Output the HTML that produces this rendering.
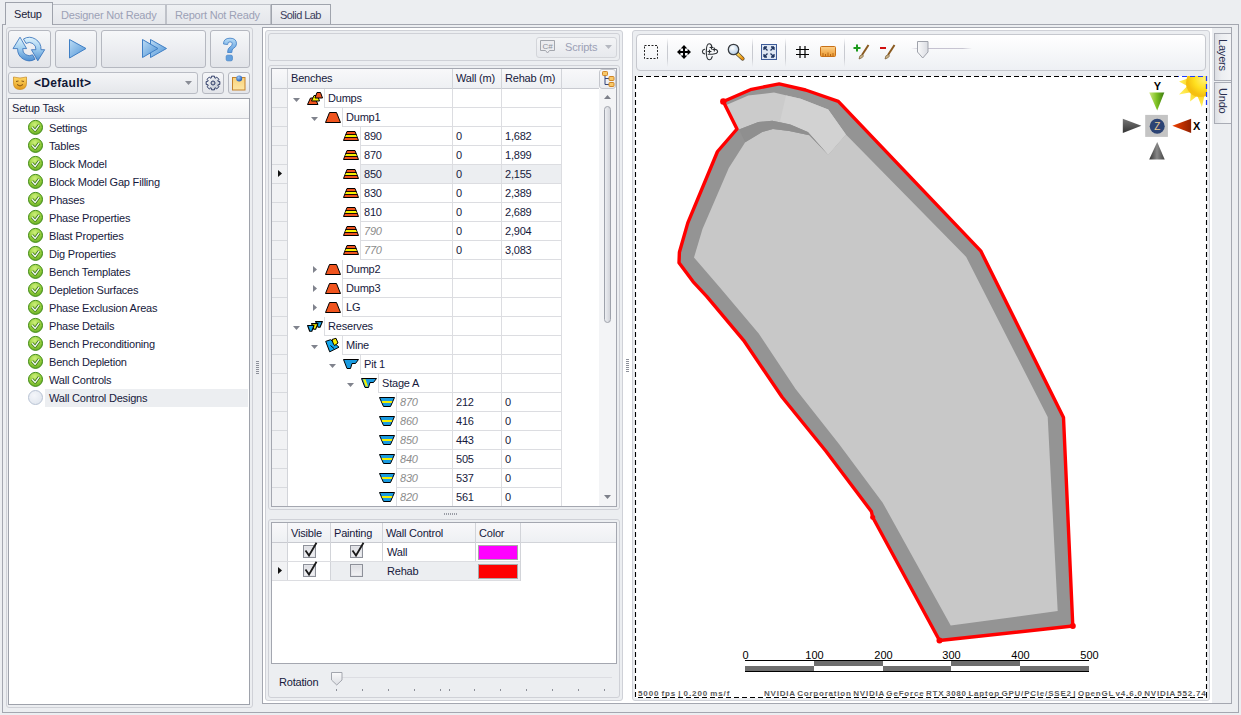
<!DOCTYPE html><html><head><meta charset="utf-8"><style>
*{box-sizing:border-box;margin:0;padding:0}
html,body{width:1241px;height:715px;overflow:hidden;background:#eceef1;font-family:"Liberation Sans", sans-serif;font-size:11px;color:#16193c;position:relative}
.t{position:absolute;white-space:nowrap;line-height:13px;letter-spacing:-0.2px}
.a{position:absolute;overflow:visible}
.gi{color:#8c8c8c;font-style:italic}
</style></head><body>
<div style="position:absolute;left:2px;top:24px;width:1237px;height:689px;border:1px solid #a4a7b0"></div>
<div style="position:absolute;left:52px;top:4px;width:114px;height:20px;background:linear-gradient(#eef0f3,#e5e7eb);border:1px solid #bfc2c9;border-bottom:none"></div>
<div class="t" style="left:61px;top:9px;color:#9ca1b6">Designer Not Ready</div>
<div style="position:absolute;left:166px;top:4px;width:105px;height:20px;background:linear-gradient(#eef0f3,#e5e7eb);border:1px solid #bfc2c9;border-bottom:none"></div>
<div class="t" style="left:175px;top:9px;color:#9ca1b6">Report Not Ready</div>
<div style="position:absolute;left:271px;top:4px;width:60px;height:20px;background:linear-gradient(#f1f2f5,#e3e5ea);border:1px solid #a0a4ad;border-bottom:none"></div>
<div class="t" style="left:280px;top:9px;color:#3a3e5c;letter-spacing:-0.55px">Solid Lab</div>
<div style="position:absolute;left:5px;top:2px;width:48px;height:23px;background:#eceef1;border:1px solid #9ea2ab;border-bottom:none"></div>
<div class="t" style="left:14px;top:8px;color:#1b1d3a">Setup</div>
<div style="position:absolute;left:6px;top:27px;width:247px;height:681px;border:1px solid #cfd1d7;border-radius:3px"></div>
<div style="position:absolute;left:8px;top:30px;width:43px;height:38px;border:1px solid #b5b8c0;border-radius:3px;background:linear-gradient(#f6f7f9,#e2e4e9)"></div>
<div style="position:absolute;left:55px;top:30px;width:42px;height:38px;border:1px solid #b5b8c0;border-radius:3px;background:linear-gradient(#f6f7f9,#e2e4e9)"></div>
<div style="position:absolute;left:101px;top:30px;width:105px;height:38px;border:1px solid #b5b8c0;border-radius:3px;background:linear-gradient(#f6f7f9,#e2e4e9)"></div>
<div style="position:absolute;left:210px;top:30px;width:40px;height:38px;border:1px solid #b5b8c0;border-radius:3px;background:linear-gradient(#f6f7f9,#e2e4e9)"></div>
<svg class="a" style="left:8px;top:30px" width="44" height="38" viewBox="0 0 44 38"><defs><linearGradient id="rb" x1="0" y1="0" x2="0" y2="1"><stop offset="0" stop-color="#dff3fc"/><stop offset="0.5" stop-color="#9fcdef"/><stop offset="1" stop-color="#4f8fd2"/></linearGradient></defs>
<path d="M9.6 18.6 L5 18.6 L12 7.2 L18.6 18.6 L14.7 18.6 A6.6 6.6 0 0 0 24.6 24.8 L27.15 29.2 A11.7 11.7 0 0 1 9.6 18.6 Z" fill="url(#rb)" stroke="#2f6cb8" stroke-width="0.8" stroke-linejoin="round"/>
<path d="M33 19.7 L36.7 19.7 L29.8 30.8 L23.4 19.7 L27.9 19.7 A6.6 6.6 0 0 0 18 13.4 L15.45 8.97 A11.7 11.7 0 0 1 33 19.7 Z" fill="url(#rb)" stroke="#2f6cb8" stroke-width="0.8" stroke-linejoin="round"/></svg>
<svg class="a" style="left:69px;top:39px" width="18" height="20" viewBox="0 0 18 20"><defs><linearGradient id="pl" x1="0" y1="0" x2="1" y2="1"><stop offset="0" stop-color="#bcdcf5"/><stop offset="1" stop-color="#4e93d6"/></linearGradient></defs><path d="M0.5 0.5 L17 9.5 L0.5 19 Z" fill="url(#pl)" stroke="#3f7fc5" stroke-width="1"/></svg>
<svg class="a" style="left:142px;top:39px" width="26" height="20" viewBox="0 0 26 20"><path d="M8.5 0.5 L24.5 9.5 L8.5 18.5 Z" fill="url(#pl)" stroke="#3f7fc5" stroke-width="1"/><path d="M0.5 0.5 L16 9.5 L0.5 18.5 Z" fill="url(#pl)" stroke="#3f7fc5" stroke-width="1"/></svg>
<svg class="a" style="left:222px;top:37px" width="16" height="25" viewBox="0 0 16 25"><defs><linearGradient id="hq" x1="0" y1="0" x2="0" y2="1"><stop offset="0" stop-color="#b8dcf6"/><stop offset="1" stop-color="#5a9ade"/></linearGradient></defs><path d="M1.5 7 Q1.5 1.2 8 1.2 Q14.5 1.2 14.5 6.8 Q14.5 9.8 11.2 11.6 Q9.8 12.5 9.8 15.5 L5.6 15.5 Q5.6 11.2 8.2 9.8 Q10.3 8.6 10.3 6.8 Q10.3 4.8 8 4.8 Q5.6 4.8 5.6 7.5 Z" fill="url(#hq)" stroke="#4a86c8" stroke-width="0.9"/><rect x="4.2" y="18.2" width="6.2" height="5.6" rx="1.4" fill="#63a0de" stroke="#4a86c8" stroke-width="0.8"/></svg>
<div style="position:absolute;left:8px;top:72px;width:190px;height:22px;border:1px solid #b9bcc4;border-radius:3px;background:linear-gradient(#f4f5f7,#e5e7eb)"></div>
<svg class="a" style="left:13px;top:76px" width="14" height="14" viewBox="0 0 14 14"><defs><linearGradient id="mk" x1="0" y1="0" x2="0" y2="1"><stop offset="0" stop-color="#ffd966"/><stop offset="1" stop-color="#e39a1c"/></linearGradient></defs><path d="M0.5 1 Q7 3 13.5 1 L13.5 7 Q13.5 13.5 7 13.5 Q0.5 13.5 0.5 7 Z" fill="url(#mk)" stroke="#c9861a" stroke-width="0.7"/><path d="M3 5.5 L5.5 5 M8.5 5 L11 5.5" stroke="#7a4a10" stroke-width="0.9"/><path d="M4 8.5 Q7 11.5 10 8.5" fill="none" stroke="#7a4a10" stroke-width="0.9"/></svg>
<div class="t" style="left:34px;top:77px;font-weight:bold;color:#101735;letter-spacing:0.3px;font-size:12px">&lt;Default&gt;</div>
<svg class="a" style="left:185px;top:81px" width="7" height="4" viewBox="0 0 7 4"><path d="M0 0 L7 0 L3.5 4 Z" fill="#8a8d96"/></svg>
<div style="position:absolute;left:202px;top:72px;width:22px;height:22px;border:1px solid #b5b8c0;border-radius:3px;background:linear-gradient(#f6f7f9,#e2e4e9)"></div>
<div style="position:absolute;left:228px;top:72px;width:22px;height:22px;border:1px solid #b5b8c0;border-radius:3px;background:linear-gradient(#f6f7f9,#e2e4e9)"></div>
<svg class="a" style="left:205px;top:75px" width="16" height="16" viewBox="0 0 16 16"><defs><linearGradient id="gr" x1="0" y1="0" x2="1" y2="1"><stop offset="0" stop-color="#ffffff"/><stop offset="1" stop-color="#b9c0cc"/></linearGradient></defs><polygon points="14.83,6.47 14.83,9.53 12.87,9.83 12.74,10.15 13.91,11.75 11.75,13.91 10.15,12.74 9.83,12.87 9.53,14.83 6.47,14.83 6.17,12.87 5.85,12.74 4.25,13.91 2.09,11.75 3.26,10.15 3.13,9.83 1.17,9.53 1.17,6.47 3.13,6.17 3.26,5.85 2.09,4.25 4.25,2.09 5.85,3.26 6.17,3.13 6.47,1.17 9.53,1.17 9.83,3.13 10.15,3.26 11.75,2.09 13.91,4.25 12.74,5.85 12.87,6.17" fill="url(#gr)" stroke="#2c3a66" stroke-width="1" stroke-linejoin="round"/><circle cx="8" cy="8" r="2" fill="#c8ccd4" stroke="#2c3a66" stroke-width="1"/></svg>
<svg class="a" style="left:231px;top:74px" width="16" height="17" viewBox="0 0 16 17"><defs><linearGradient id="nt" x1="0" y1="0" x2="0" y2="1"><stop offset="0" stop-color="#f9d27a"/><stop offset="1" stop-color="#fde6a6"/></linearGradient><radialGradient id="pin" cx="40%" cy="35%" r="60%"><stop offset="0" stop-color="#9cc8f4"/><stop offset="1" stop-color="#2a62b8"/></radialGradient></defs><rect x="1.5" y="3.5" width="12.5" height="12.5" fill="url(#nt)" stroke="#c4822c" stroke-width="1"/><circle cx="8.2" cy="4.5" r="3" fill="url(#pin)"/></svg>
<div style="position:absolute;left:8px;top:98px;width:242px;height:607px;border:1px solid #9ea2ab;background:#fff"></div>
<div style="position:absolute;left:9px;top:99px;width:240px;height:20px;background:linear-gradient(#fdfdfd,#f1f2f4);border-bottom:1px solid #c9cbd1"></div>
<div class="t" style="left:12px;top:102px;">Setup Task</div>
<svg width="0" height="0" style="position:absolute"><defs><radialGradient id="gck" cx="45%" cy="30%" r="75%"><stop offset="0" stop-color="#cdf07a"/><stop offset="0.55" stop-color="#98d040"/><stop offset="1" stop-color="#5fa820"/></radialGradient></defs></svg>
<svg class="a" style="left:28px;top:120px" width="16" height="16" viewBox="0 0 16 16"><circle cx="7.5" cy="7.4" r="7" fill="url(#gck)" stroke="#3f8a14" stroke-width="1"/><path d="M4.1 7.2 L7.2 10.4 L11.1 5.1" fill="none" stroke="#2f6e10" stroke-width="2.8" stroke-linejoin="round"/><path d="M4.1 7.2 L7.2 10.4 L11.1 5.1" fill="none" stroke="#f4f8f0" stroke-width="1.4" stroke-linejoin="round"/></svg>
<div class="t" style="left:49px;top:122px;">Settings</div>
<svg class="a" style="left:28px;top:138px" width="16" height="16" viewBox="0 0 16 16"><circle cx="7.5" cy="7.4" r="7" fill="url(#gck)" stroke="#3f8a14" stroke-width="1"/><path d="M4.1 7.2 L7.2 10.4 L11.1 5.1" fill="none" stroke="#2f6e10" stroke-width="2.8" stroke-linejoin="round"/><path d="M4.1 7.2 L7.2 10.4 L11.1 5.1" fill="none" stroke="#f4f8f0" stroke-width="1.4" stroke-linejoin="round"/></svg>
<div class="t" style="left:49px;top:140px;">Tables</div>
<svg class="a" style="left:28px;top:156px" width="16" height="16" viewBox="0 0 16 16"><circle cx="7.5" cy="7.4" r="7" fill="url(#gck)" stroke="#3f8a14" stroke-width="1"/><path d="M4.1 7.2 L7.2 10.4 L11.1 5.1" fill="none" stroke="#2f6e10" stroke-width="2.8" stroke-linejoin="round"/><path d="M4.1 7.2 L7.2 10.4 L11.1 5.1" fill="none" stroke="#f4f8f0" stroke-width="1.4" stroke-linejoin="round"/></svg>
<div class="t" style="left:49px;top:158px;">Block Model</div>
<svg class="a" style="left:28px;top:174px" width="16" height="16" viewBox="0 0 16 16"><circle cx="7.5" cy="7.4" r="7" fill="url(#gck)" stroke="#3f8a14" stroke-width="1"/><path d="M4.1 7.2 L7.2 10.4 L11.1 5.1" fill="none" stroke="#2f6e10" stroke-width="2.8" stroke-linejoin="round"/><path d="M4.1 7.2 L7.2 10.4 L11.1 5.1" fill="none" stroke="#f4f8f0" stroke-width="1.4" stroke-linejoin="round"/></svg>
<div class="t" style="left:49px;top:176px;">Block Model Gap Filling</div>
<svg class="a" style="left:28px;top:192px" width="16" height="16" viewBox="0 0 16 16"><circle cx="7.5" cy="7.4" r="7" fill="url(#gck)" stroke="#3f8a14" stroke-width="1"/><path d="M4.1 7.2 L7.2 10.4 L11.1 5.1" fill="none" stroke="#2f6e10" stroke-width="2.8" stroke-linejoin="round"/><path d="M4.1 7.2 L7.2 10.4 L11.1 5.1" fill="none" stroke="#f4f8f0" stroke-width="1.4" stroke-linejoin="round"/></svg>
<div class="t" style="left:49px;top:194px;">Phases</div>
<svg class="a" style="left:28px;top:210px" width="16" height="16" viewBox="0 0 16 16"><circle cx="7.5" cy="7.4" r="7" fill="url(#gck)" stroke="#3f8a14" stroke-width="1"/><path d="M4.1 7.2 L7.2 10.4 L11.1 5.1" fill="none" stroke="#2f6e10" stroke-width="2.8" stroke-linejoin="round"/><path d="M4.1 7.2 L7.2 10.4 L11.1 5.1" fill="none" stroke="#f4f8f0" stroke-width="1.4" stroke-linejoin="round"/></svg>
<div class="t" style="left:49px;top:212px;">Phase Properties</div>
<svg class="a" style="left:28px;top:228px" width="16" height="16" viewBox="0 0 16 16"><circle cx="7.5" cy="7.4" r="7" fill="url(#gck)" stroke="#3f8a14" stroke-width="1"/><path d="M4.1 7.2 L7.2 10.4 L11.1 5.1" fill="none" stroke="#2f6e10" stroke-width="2.8" stroke-linejoin="round"/><path d="M4.1 7.2 L7.2 10.4 L11.1 5.1" fill="none" stroke="#f4f8f0" stroke-width="1.4" stroke-linejoin="round"/></svg>
<div class="t" style="left:49px;top:230px;">Blast Properties</div>
<svg class="a" style="left:28px;top:246px" width="16" height="16" viewBox="0 0 16 16"><circle cx="7.5" cy="7.4" r="7" fill="url(#gck)" stroke="#3f8a14" stroke-width="1"/><path d="M4.1 7.2 L7.2 10.4 L11.1 5.1" fill="none" stroke="#2f6e10" stroke-width="2.8" stroke-linejoin="round"/><path d="M4.1 7.2 L7.2 10.4 L11.1 5.1" fill="none" stroke="#f4f8f0" stroke-width="1.4" stroke-linejoin="round"/></svg>
<div class="t" style="left:49px;top:248px;">Dig Properties</div>
<svg class="a" style="left:28px;top:264px" width="16" height="16" viewBox="0 0 16 16"><circle cx="7.5" cy="7.4" r="7" fill="url(#gck)" stroke="#3f8a14" stroke-width="1"/><path d="M4.1 7.2 L7.2 10.4 L11.1 5.1" fill="none" stroke="#2f6e10" stroke-width="2.8" stroke-linejoin="round"/><path d="M4.1 7.2 L7.2 10.4 L11.1 5.1" fill="none" stroke="#f4f8f0" stroke-width="1.4" stroke-linejoin="round"/></svg>
<div class="t" style="left:49px;top:266px;">Bench Templates</div>
<svg class="a" style="left:28px;top:282px" width="16" height="16" viewBox="0 0 16 16"><circle cx="7.5" cy="7.4" r="7" fill="url(#gck)" stroke="#3f8a14" stroke-width="1"/><path d="M4.1 7.2 L7.2 10.4 L11.1 5.1" fill="none" stroke="#2f6e10" stroke-width="2.8" stroke-linejoin="round"/><path d="M4.1 7.2 L7.2 10.4 L11.1 5.1" fill="none" stroke="#f4f8f0" stroke-width="1.4" stroke-linejoin="round"/></svg>
<div class="t" style="left:49px;top:284px;">Depletion Surfaces</div>
<svg class="a" style="left:28px;top:300px" width="16" height="16" viewBox="0 0 16 16"><circle cx="7.5" cy="7.4" r="7" fill="url(#gck)" stroke="#3f8a14" stroke-width="1"/><path d="M4.1 7.2 L7.2 10.4 L11.1 5.1" fill="none" stroke="#2f6e10" stroke-width="2.8" stroke-linejoin="round"/><path d="M4.1 7.2 L7.2 10.4 L11.1 5.1" fill="none" stroke="#f4f8f0" stroke-width="1.4" stroke-linejoin="round"/></svg>
<div class="t" style="left:49px;top:302px;">Phase Exclusion Areas</div>
<svg class="a" style="left:28px;top:318px" width="16" height="16" viewBox="0 0 16 16"><circle cx="7.5" cy="7.4" r="7" fill="url(#gck)" stroke="#3f8a14" stroke-width="1"/><path d="M4.1 7.2 L7.2 10.4 L11.1 5.1" fill="none" stroke="#2f6e10" stroke-width="2.8" stroke-linejoin="round"/><path d="M4.1 7.2 L7.2 10.4 L11.1 5.1" fill="none" stroke="#f4f8f0" stroke-width="1.4" stroke-linejoin="round"/></svg>
<div class="t" style="left:49px;top:320px;">Phase Details</div>
<svg class="a" style="left:28px;top:336px" width="16" height="16" viewBox="0 0 16 16"><circle cx="7.5" cy="7.4" r="7" fill="url(#gck)" stroke="#3f8a14" stroke-width="1"/><path d="M4.1 7.2 L7.2 10.4 L11.1 5.1" fill="none" stroke="#2f6e10" stroke-width="2.8" stroke-linejoin="round"/><path d="M4.1 7.2 L7.2 10.4 L11.1 5.1" fill="none" stroke="#f4f8f0" stroke-width="1.4" stroke-linejoin="round"/></svg>
<div class="t" style="left:49px;top:338px;">Bench Preconditioning</div>
<svg class="a" style="left:28px;top:354px" width="16" height="16" viewBox="0 0 16 16"><circle cx="7.5" cy="7.4" r="7" fill="url(#gck)" stroke="#3f8a14" stroke-width="1"/><path d="M4.1 7.2 L7.2 10.4 L11.1 5.1" fill="none" stroke="#2f6e10" stroke-width="2.8" stroke-linejoin="round"/><path d="M4.1 7.2 L7.2 10.4 L11.1 5.1" fill="none" stroke="#f4f8f0" stroke-width="1.4" stroke-linejoin="round"/></svg>
<div class="t" style="left:49px;top:356px;">Bench Depletion</div>
<svg class="a" style="left:28px;top:372px" width="16" height="16" viewBox="0 0 16 16"><circle cx="7.5" cy="7.4" r="7" fill="url(#gck)" stroke="#3f8a14" stroke-width="1"/><path d="M4.1 7.2 L7.2 10.4 L11.1 5.1" fill="none" stroke="#2f6e10" stroke-width="2.8" stroke-linejoin="round"/><path d="M4.1 7.2 L7.2 10.4 L11.1 5.1" fill="none" stroke="#f4f8f0" stroke-width="1.4" stroke-linejoin="round"/></svg>
<div class="t" style="left:49px;top:374px;">Wall Controls</div>
<div style="position:absolute;left:45px;top:389px;width:203px;height:18px;background:#eceef1"></div>
<div style="position:absolute;left:28px;top:390px;width:15px;height:15px;border-radius:50%;background:radial-gradient(circle at 40% 35%,#f4f6fa,#dde3ec);border:1px solid #b7c2d3"></div>
<div class="t" style="left:49px;top:392px;">Wall Control Designs</div>
<div style="position:absolute;left:262px;top:27px;width:970px;height:677px;border:1px solid #a4a7b0;background:#fff"></div>
<div style="position:absolute;left:265px;top:30px;width:358px;height:671px;border:1px solid #cfd1d7;border-radius:3px;background:#eceef1"></div>
<svg class="a" style="left:256px;top:361px" width="3" height="13" viewBox="0 0 3 13"><rect x="0" y="0" width="3" height="1" fill="#8d909a"/><rect x="0" y="2" width="3" height="1" fill="#8d909a"/><rect x="0" y="4" width="3" height="1" fill="#8d909a"/><rect x="0" y="6" width="3" height="1" fill="#8d909a"/><rect x="0" y="8" width="3" height="1" fill="#8d909a"/><rect x="0" y="10" width="3" height="1" fill="#8d909a"/><rect x="0" y="12" width="3" height="1" fill="#8d909a"/></svg>
<svg class="a" style="left:626px;top:359px" width="3" height="13" viewBox="0 0 3 13"><rect x="0" y="0" width="3" height="1" fill="#8d909a"/><rect x="0" y="2" width="3" height="1" fill="#8d909a"/><rect x="0" y="4" width="3" height="1" fill="#8d909a"/><rect x="0" y="6" width="3" height="1" fill="#8d909a"/><rect x="0" y="8" width="3" height="1" fill="#8d909a"/><rect x="0" y="10" width="3" height="1" fill="#8d909a"/><rect x="0" y="12" width="3" height="1" fill="#8d909a"/></svg>
<div style="position:absolute;left:268px;top:33px;width:352px;height:28px;border:1px solid #cfd1d7;border-radius:3px"></div>
<div style="position:absolute;left:536px;top:37px;width:81px;height:21px;border:1px solid #d3d5da;border-radius:3px;background:linear-gradient(#f3f4f6,#e7e9ed)"></div>
<svg class="a" style="left:540px;top:40px" width="16" height="14" viewBox="0 0 16 14"><path d="M0.5 0.5 H14.5 V10.5 H9.5 L7.5 13 L5.5 10.5 H0.5 Z" fill="#ececef" stroke="#a3a6ad" stroke-width="1"/><text x="7.5" y="8.5" font-family="Liberation Sans" font-size="8" text-anchor="middle" fill="#8d9099">C#</text></svg>
<div class="t" style="left:565px;top:41px;color:#9ca1b6">Scripts</div>
<svg class="a" style="left:605px;top:45px" width="7" height="4" viewBox="0 0 7 4"><path d="M0 0 L7 0 L3.5 4 Z" fill="#b5b8c0"/></svg>
<div style="position:absolute;left:268px;top:65px;width:352px;height:445px;border:1px solid #cfd1d7;border-radius:3px"></div>
<div style="position:absolute;left:271px;top:68px;width:346px;height:439px;border:1px solid #a4a7b0;background:#fff"></div>
<div style="position:absolute;left:272px;top:69px;width:327px;height:20px;background:linear-gradient(#f8f8fa,#eef0f3);border-bottom:1px solid #c8cad0"></div>
<div style="position:absolute;left:287px;top:69px;width:1px;height:20px;background:#d2d4d9"></div>
<div style="position:absolute;left:452px;top:69px;width:1px;height:20px;background:#d2d4d9"></div>
<div style="position:absolute;left:501px;top:69px;width:1px;height:20px;background:#d2d4d9"></div>
<div style="position:absolute;left:561px;top:69px;width:1px;height:20px;background:#d2d4d9"></div>
<div class="t" style="left:291px;top:72px;">Benches</div>
<div class="t" style="left:456px;top:72px;">Wall (m)</div>
<div class="t" style="left:505px;top:72px;">Rehab (m)</div>
<div style="position:absolute;left:599px;top:69px;width:17px;height:20px;border:1px solid #c4c6cc;border-radius:3px;background:linear-gradient(#f8f8fa,#e9ebef)"></div>
<svg class="a" style="left:601px;top:70px" width="14" height="18" viewBox="0 0 14 18"><path d="M4 5.5 V14.5 H8 M4 8.5 H8" fill="none" stroke="#34457a" stroke-width="1"/><rect x="1.5" y="1.5" width="5" height="4" rx="0.8" fill="#f8c868" stroke="#d08628"/><rect x="8" y="6.5" width="5" height="4" rx="0.8" fill="#f8c868" stroke="#d08628"/><rect x="8" y="12.5" width="5" height="4" rx="0.8" fill="#f8c868" stroke="#d08628"/></svg>
<div style="position:absolute;left:272px;top:89px;width:15px;height:417px;background:#f1f2f4"></div>
<div style="position:absolute;left:287px;top:89px;width:1px;height:417px;background:#d2d4d9"></div>
<div style="position:absolute;left:599px;top:89px;width:17px;height:417px;background:#f3f4f6"></div>
<svg class="a" style="left:604px;top:95px" width="7" height="4" viewBox="0 0 7 4"><path d="M0 4 L7 4 L3.5 0 Z" fill="#7d808a"/></svg>
<div style="position:absolute;left:604px;top:106px;width:7px;height:217px;border:1px solid #9ea2ab;border-radius:4px;background:linear-gradient(90deg,#eceef2,#d2d4da)"></div>
<svg class="a" style="left:604px;top:495px" width="7" height="4" viewBox="0 0 7 4"><path d="M0 0 L7 0 L3.5 4 Z" fill="#7d808a"/></svg>
<div style="position:absolute;left:272px;top:107px;width:15px;height:1px;background:#d8dade"></div>
<div style="position:absolute;left:324px;top:107px;width:238px;height:1px;background:#dcdde1"></div>
<div style="position:absolute;left:324px;top:89px;width:1px;height:19px;background:#dcdde1"></div>
<div style="position:absolute;left:452px;top:89px;width:1px;height:19px;background:#dcdde1"></div>
<div style="position:absolute;left:501px;top:89px;width:1px;height:19px;background:#dcdde1"></div>
<div style="position:absolute;left:561px;top:89px;width:1px;height:19px;background:#dcdde1"></div>
<svg class="a" style="left:307px;top:92px" width="16" height="13" viewBox="0 0 16 13"><path d="M3.5 6 H8 L11 12.5 H0.5 Z" fill="#f0541e" stroke="#000" stroke-width="1"/><path d="M7 3.5 H10.5 L12.5 9 H4.5 Z" fill="#f5f000" stroke="#000" stroke-width="1"/><path d="M10 0.5 H13.5 L15.5 6 H8 Z" fill="#f0541e" stroke="#000" stroke-width="1"/></svg>
<svg class="a" style="left:293px;top:98px" width="7" height="4" viewBox="0 0 7 4"><path d="M0 0 L7 0 L3.5 4 Z" fill="#80838d"/></svg>
<div class="t" style="left:328px;top:92px">Dumps</div>
<div style="position:absolute;left:272px;top:126px;width:15px;height:1px;background:#d8dade"></div>
<div style="position:absolute;left:342px;top:126px;width:220px;height:1px;background:#dcdde1"></div>
<div style="position:absolute;left:342px;top:108px;width:1px;height:19px;background:#dcdde1"></div>
<div style="position:absolute;left:452px;top:108px;width:1px;height:19px;background:#dcdde1"></div>
<div style="position:absolute;left:501px;top:108px;width:1px;height:19px;background:#dcdde1"></div>
<div style="position:absolute;left:561px;top:108px;width:1px;height:19px;background:#dcdde1"></div>
<svg class="a" style="left:325px;top:112px" width="16" height="11" viewBox="0 0 16 11"><path d="M4.5 0.5 H11.5 L15.5 10.5 H0.5 Z" fill="#f0541e" stroke="#000" stroke-width="1"/></svg>
<svg class="a" style="left:311px;top:117px" width="7" height="4" viewBox="0 0 7 4"><path d="M0 0 L7 0 L3.5 4 Z" fill="#80838d"/></svg>
<div class="t" style="left:346px;top:111px">Dump1</div>
<div style="position:absolute;left:272px;top:145px;width:15px;height:1px;background:#d8dade"></div>
<div style="position:absolute;left:360px;top:145px;width:202px;height:1px;background:#dcdde1"></div>
<div style="position:absolute;left:360px;top:127px;width:1px;height:19px;background:#dcdde1"></div>
<div style="position:absolute;left:452px;top:127px;width:1px;height:19px;background:#dcdde1"></div>
<div style="position:absolute;left:501px;top:127px;width:1px;height:19px;background:#dcdde1"></div>
<div style="position:absolute;left:561px;top:127px;width:1px;height:19px;background:#dcdde1"></div>
<svg class="a" style="left:343px;top:131px" width="16" height="10" viewBox="0 0 16 10"><path d="M4 0.5 H12 L15.5 9.5 H0.5 Z" fill="#f0541e" stroke="#000" stroke-width="1"/><path d="M2.6 3.5 H13.4 M1.8 6.5 H14.2" stroke="#000" stroke-width="0.9"/><path d="M3 4 H13 L13.8 6 H2.2 Z" fill="#f5f000"/></svg>
<div class="t" style="left:364px;top:130px">890</div>
<div class="t" style="left:456px;top:130px;">0</div>
<div class="t" style="left:505px;top:130px;">1,682</div>
<div style="position:absolute;left:272px;top:164px;width:15px;height:1px;background:#d8dade"></div>
<div style="position:absolute;left:360px;top:164px;width:202px;height:1px;background:#dcdde1"></div>
<div style="position:absolute;left:360px;top:146px;width:1px;height:19px;background:#dcdde1"></div>
<div style="position:absolute;left:452px;top:146px;width:1px;height:19px;background:#dcdde1"></div>
<div style="position:absolute;left:501px;top:146px;width:1px;height:19px;background:#dcdde1"></div>
<div style="position:absolute;left:561px;top:146px;width:1px;height:19px;background:#dcdde1"></div>
<svg class="a" style="left:343px;top:150px" width="16" height="10" viewBox="0 0 16 10"><path d="M4 0.5 H12 L15.5 9.5 H0.5 Z" fill="#f0541e" stroke="#000" stroke-width="1"/><path d="M2.6 3.5 H13.4 M1.8 6.5 H14.2" stroke="#000" stroke-width="0.9"/><path d="M3 4 H13 L13.8 6 H2.2 Z" fill="#f5f000"/></svg>
<div class="t" style="left:364px;top:149px">870</div>
<div class="t" style="left:456px;top:149px;">0</div>
<div class="t" style="left:505px;top:149px;">1,899</div>
<div style="position:absolute;left:272px;top:183px;width:15px;height:1px;background:#d8dade"></div>
<div style="position:absolute;left:360px;top:165px;width:201px;height:18px;background:#eceef1"></div>
<svg class="a" style="left:278px;top:170px" width="4" height="7" viewBox="0 0 4 7"><path d="M0 0 L4 3.5 L0 7 Z" fill="#111"/></svg>
<div style="position:absolute;left:360px;top:183px;width:202px;height:1px;background:#dcdde1"></div>
<div style="position:absolute;left:360px;top:165px;width:1px;height:19px;background:#dcdde1"></div>
<div style="position:absolute;left:452px;top:165px;width:1px;height:19px;background:#dcdde1"></div>
<div style="position:absolute;left:501px;top:165px;width:1px;height:19px;background:#dcdde1"></div>
<div style="position:absolute;left:561px;top:165px;width:1px;height:19px;background:#dcdde1"></div>
<svg class="a" style="left:343px;top:169px" width="16" height="10" viewBox="0 0 16 10"><path d="M4 0.5 H12 L15.5 9.5 H0.5 Z" fill="#f0541e" stroke="#000" stroke-width="1"/><path d="M2.6 3.5 H13.4 M1.8 6.5 H14.2" stroke="#000" stroke-width="0.9"/><path d="M3 4 H13 L13.8 6 H2.2 Z" fill="#f5f000"/></svg>
<div class="t" style="left:364px;top:168px">850</div>
<div class="t" style="left:456px;top:168px;">0</div>
<div class="t" style="left:505px;top:168px;">2,155</div>
<div style="position:absolute;left:272px;top:202px;width:15px;height:1px;background:#d8dade"></div>
<div style="position:absolute;left:360px;top:202px;width:202px;height:1px;background:#dcdde1"></div>
<div style="position:absolute;left:360px;top:184px;width:1px;height:19px;background:#dcdde1"></div>
<div style="position:absolute;left:452px;top:184px;width:1px;height:19px;background:#dcdde1"></div>
<div style="position:absolute;left:501px;top:184px;width:1px;height:19px;background:#dcdde1"></div>
<div style="position:absolute;left:561px;top:184px;width:1px;height:19px;background:#dcdde1"></div>
<svg class="a" style="left:343px;top:188px" width="16" height="10" viewBox="0 0 16 10"><path d="M4 0.5 H12 L15.5 9.5 H0.5 Z" fill="#f0541e" stroke="#000" stroke-width="1"/><path d="M2.6 3.5 H13.4 M1.8 6.5 H14.2" stroke="#000" stroke-width="0.9"/><path d="M3 4 H13 L13.8 6 H2.2 Z" fill="#f5f000"/></svg>
<div class="t" style="left:364px;top:187px">830</div>
<div class="t" style="left:456px;top:187px;">0</div>
<div class="t" style="left:505px;top:187px;">2,389</div>
<div style="position:absolute;left:272px;top:221px;width:15px;height:1px;background:#d8dade"></div>
<div style="position:absolute;left:360px;top:221px;width:202px;height:1px;background:#dcdde1"></div>
<div style="position:absolute;left:360px;top:203px;width:1px;height:19px;background:#dcdde1"></div>
<div style="position:absolute;left:452px;top:203px;width:1px;height:19px;background:#dcdde1"></div>
<div style="position:absolute;left:501px;top:203px;width:1px;height:19px;background:#dcdde1"></div>
<div style="position:absolute;left:561px;top:203px;width:1px;height:19px;background:#dcdde1"></div>
<svg class="a" style="left:343px;top:207px" width="16" height="10" viewBox="0 0 16 10"><path d="M4 0.5 H12 L15.5 9.5 H0.5 Z" fill="#f0541e" stroke="#000" stroke-width="1"/><path d="M2.6 3.5 H13.4 M1.8 6.5 H14.2" stroke="#000" stroke-width="0.9"/><path d="M3 4 H13 L13.8 6 H2.2 Z" fill="#f5f000"/></svg>
<div class="t" style="left:364px;top:206px">810</div>
<div class="t" style="left:456px;top:206px;">0</div>
<div class="t" style="left:505px;top:206px;">2,689</div>
<div style="position:absolute;left:272px;top:240px;width:15px;height:1px;background:#d8dade"></div>
<div style="position:absolute;left:360px;top:240px;width:202px;height:1px;background:#dcdde1"></div>
<div style="position:absolute;left:360px;top:222px;width:1px;height:19px;background:#dcdde1"></div>
<div style="position:absolute;left:452px;top:222px;width:1px;height:19px;background:#dcdde1"></div>
<div style="position:absolute;left:501px;top:222px;width:1px;height:19px;background:#dcdde1"></div>
<div style="position:absolute;left:561px;top:222px;width:1px;height:19px;background:#dcdde1"></div>
<svg class="a" style="left:343px;top:226px" width="16" height="10" viewBox="0 0 16 10"><path d="M4 0.5 H12 L15.5 9.5 H0.5 Z" fill="#f0541e" stroke="#000" stroke-width="1"/><path d="M2.6 3.5 H13.4 M1.8 6.5 H14.2" stroke="#000" stroke-width="0.9"/><path d="M3 4 H13 L13.8 6 H2.2 Z" fill="#f5f000"/></svg>
<div class="t gi" style="left:364px;top:225px">790</div>
<div class="t" style="left:456px;top:225px;">0</div>
<div class="t" style="left:505px;top:225px;">2,904</div>
<div style="position:absolute;left:272px;top:259px;width:15px;height:1px;background:#d8dade"></div>
<div style="position:absolute;left:360px;top:259px;width:202px;height:1px;background:#dcdde1"></div>
<div style="position:absolute;left:360px;top:241px;width:1px;height:19px;background:#dcdde1"></div>
<div style="position:absolute;left:452px;top:241px;width:1px;height:19px;background:#dcdde1"></div>
<div style="position:absolute;left:501px;top:241px;width:1px;height:19px;background:#dcdde1"></div>
<div style="position:absolute;left:561px;top:241px;width:1px;height:19px;background:#dcdde1"></div>
<svg class="a" style="left:343px;top:245px" width="16" height="10" viewBox="0 0 16 10"><path d="M4 0.5 H12 L15.5 9.5 H0.5 Z" fill="#f0541e" stroke="#000" stroke-width="1"/><path d="M2.6 3.5 H13.4 M1.8 6.5 H14.2" stroke="#000" stroke-width="0.9"/><path d="M3 4 H13 L13.8 6 H2.2 Z" fill="#f5f000"/></svg>
<div class="t gi" style="left:364px;top:244px">770</div>
<div class="t" style="left:456px;top:244px;">0</div>
<div class="t" style="left:505px;top:244px;">3,083</div>
<div style="position:absolute;left:272px;top:278px;width:15px;height:1px;background:#d8dade"></div>
<div style="position:absolute;left:342px;top:278px;width:220px;height:1px;background:#dcdde1"></div>
<div style="position:absolute;left:342px;top:260px;width:1px;height:19px;background:#dcdde1"></div>
<div style="position:absolute;left:452px;top:260px;width:1px;height:19px;background:#dcdde1"></div>
<div style="position:absolute;left:501px;top:260px;width:1px;height:19px;background:#dcdde1"></div>
<div style="position:absolute;left:561px;top:260px;width:1px;height:19px;background:#dcdde1"></div>
<svg class="a" style="left:325px;top:264px" width="16" height="11" viewBox="0 0 16 11"><path d="M4.5 0.5 H11.5 L15.5 10.5 H0.5 Z" fill="#f0541e" stroke="#000" stroke-width="1"/></svg>
<svg class="a" style="left:313px;top:266px" width="4" height="7" viewBox="0 0 4 7"><path d="M0 0 L4 3.5 L0 7 Z" fill="#80838d"/></svg>
<div class="t" style="left:346px;top:263px">Dump2</div>
<div style="position:absolute;left:272px;top:297px;width:15px;height:1px;background:#d8dade"></div>
<div style="position:absolute;left:342px;top:297px;width:220px;height:1px;background:#dcdde1"></div>
<div style="position:absolute;left:342px;top:279px;width:1px;height:19px;background:#dcdde1"></div>
<div style="position:absolute;left:452px;top:279px;width:1px;height:19px;background:#dcdde1"></div>
<div style="position:absolute;left:501px;top:279px;width:1px;height:19px;background:#dcdde1"></div>
<div style="position:absolute;left:561px;top:279px;width:1px;height:19px;background:#dcdde1"></div>
<svg class="a" style="left:325px;top:283px" width="16" height="11" viewBox="0 0 16 11"><path d="M4.5 0.5 H11.5 L15.5 10.5 H0.5 Z" fill="#f0541e" stroke="#000" stroke-width="1"/></svg>
<svg class="a" style="left:313px;top:285px" width="4" height="7" viewBox="0 0 4 7"><path d="M0 0 L4 3.5 L0 7 Z" fill="#80838d"/></svg>
<div class="t" style="left:346px;top:282px">Dump3</div>
<div style="position:absolute;left:272px;top:316px;width:15px;height:1px;background:#d8dade"></div>
<div style="position:absolute;left:342px;top:316px;width:220px;height:1px;background:#dcdde1"></div>
<div style="position:absolute;left:342px;top:298px;width:1px;height:19px;background:#dcdde1"></div>
<div style="position:absolute;left:452px;top:298px;width:1px;height:19px;background:#dcdde1"></div>
<div style="position:absolute;left:501px;top:298px;width:1px;height:19px;background:#dcdde1"></div>
<div style="position:absolute;left:561px;top:298px;width:1px;height:19px;background:#dcdde1"></div>
<svg class="a" style="left:325px;top:302px" width="16" height="11" viewBox="0 0 16 11"><path d="M4.5 0.5 H11.5 L15.5 10.5 H0.5 Z" fill="#f0541e" stroke="#000" stroke-width="1"/></svg>
<svg class="a" style="left:313px;top:304px" width="4" height="7" viewBox="0 0 4 7"><path d="M0 0 L4 3.5 L0 7 Z" fill="#80838d"/></svg>
<div class="t" style="left:346px;top:301px">LG</div>
<div style="position:absolute;left:272px;top:335px;width:15px;height:1px;background:#d8dade"></div>
<div style="position:absolute;left:324px;top:335px;width:238px;height:1px;background:#dcdde1"></div>
<div style="position:absolute;left:324px;top:317px;width:1px;height:19px;background:#dcdde1"></div>
<div style="position:absolute;left:452px;top:317px;width:1px;height:19px;background:#dcdde1"></div>
<div style="position:absolute;left:501px;top:317px;width:1px;height:19px;background:#dcdde1"></div>
<div style="position:absolute;left:561px;top:317px;width:1px;height:19px;background:#dcdde1"></div>
<svg class="a" style="left:307px;top:321px" width="16" height="11" viewBox="0 0 16 11"><g stroke="#000" stroke-width="1.1" stroke-linejoin="round"><path d="M8.6 0.6 H15.4 L13 6.2 H11.2 Z" fill="#12a8f0"/><path d="M4.6 2.6 H11 L8.6 8.2 H6.8 Z" fill="#f8f000"/><path d="M0.6 4.5 H7 L4.8 10.3 H2.7 Z" fill="#12a8f0"/></g></svg>
<svg class="a" style="left:293px;top:326px" width="7" height="4" viewBox="0 0 7 4"><path d="M0 0 L7 0 L3.5 4 Z" fill="#80838d"/></svg>
<div class="t" style="left:328px;top:320px">Reserves</div>
<div style="position:absolute;left:272px;top:354px;width:15px;height:1px;background:#d8dade"></div>
<div style="position:absolute;left:342px;top:354px;width:220px;height:1px;background:#dcdde1"></div>
<div style="position:absolute;left:342px;top:336px;width:1px;height:19px;background:#dcdde1"></div>
<div style="position:absolute;left:452px;top:336px;width:1px;height:19px;background:#dcdde1"></div>
<div style="position:absolute;left:501px;top:336px;width:1px;height:19px;background:#dcdde1"></div>
<div style="position:absolute;left:561px;top:336px;width:1px;height:19px;background:#dcdde1"></div>
<svg class="a" style="left:325px;top:338px" width="15" height="15" viewBox="0 0 15 15"><g stroke="#000" stroke-width="1" stroke-linejoin="round"><path d="M0.7 3.4 L5.5 1.7 L14 9.2 L4.7 13.8 Z" fill="#12a8f0"/><path d="M7 1.5 L11 0.3 L13 5 L9.5 7.6 L8 5 Z" fill="#f8f000"/><path d="M5.5 7.5 L9 10.5" fill="none"/></g></svg>
<svg class="a" style="left:311px;top:345px" width="7" height="4" viewBox="0 0 7 4"><path d="M0 0 L7 0 L3.5 4 Z" fill="#80838d"/></svg>
<div class="t" style="left:346px;top:339px">Mine</div>
<div style="position:absolute;left:272px;top:373px;width:15px;height:1px;background:#d8dade"></div>
<div style="position:absolute;left:360px;top:373px;width:202px;height:1px;background:#dcdde1"></div>
<div style="position:absolute;left:360px;top:355px;width:1px;height:19px;background:#dcdde1"></div>
<div style="position:absolute;left:452px;top:355px;width:1px;height:19px;background:#dcdde1"></div>
<div style="position:absolute;left:501px;top:355px;width:1px;height:19px;background:#dcdde1"></div>
<div style="position:absolute;left:561px;top:355px;width:1px;height:19px;background:#dcdde1"></div>
<svg class="a" style="left:343px;top:359px" width="16" height="10" viewBox="0 0 16 10"><path d="M0.5 0.5 H15.5 L12.5 4.5 L9 4.5 L7.5 9.5 H4 Z" fill="#1a9be0" stroke="#000" stroke-width="1"/></svg>
<svg class="a" style="left:329px;top:364px" width="7" height="4" viewBox="0 0 7 4"><path d="M0 0 L7 0 L3.5 4 Z" fill="#80838d"/></svg>
<div class="t" style="left:364px;top:358px">Pit 1</div>
<div style="position:absolute;left:272px;top:392px;width:15px;height:1px;background:#d8dade"></div>
<div style="position:absolute;left:378px;top:392px;width:184px;height:1px;background:#dcdde1"></div>
<div style="position:absolute;left:378px;top:374px;width:1px;height:19px;background:#dcdde1"></div>
<div style="position:absolute;left:452px;top:374px;width:1px;height:19px;background:#dcdde1"></div>
<div style="position:absolute;left:501px;top:374px;width:1px;height:19px;background:#dcdde1"></div>
<div style="position:absolute;left:561px;top:374px;width:1px;height:19px;background:#dcdde1"></div>
<svg class="a" style="left:361px;top:378px" width="16" height="10" viewBox="0 0 16 10"><path d="M0.5 0.5 H15.5 L12.5 4.5 L9 4.5 L7.5 9.5 H4 Z" fill="#1a9be0" stroke="#000" stroke-width="1"/><path d="M2 1.2 H4.5 L7 8.6 H4.8 Z" fill="#f5f000"/></svg>
<svg class="a" style="left:347px;top:383px" width="7" height="4" viewBox="0 0 7 4"><path d="M0 0 L7 0 L3.5 4 Z" fill="#80838d"/></svg>
<div class="t" style="left:382px;top:377px">Stage A</div>
<div style="position:absolute;left:272px;top:411px;width:15px;height:1px;background:#d8dade"></div>
<div style="position:absolute;left:396px;top:411px;width:166px;height:1px;background:#dcdde1"></div>
<div style="position:absolute;left:396px;top:393px;width:1px;height:19px;background:#dcdde1"></div>
<div style="position:absolute;left:452px;top:393px;width:1px;height:19px;background:#dcdde1"></div>
<div style="position:absolute;left:501px;top:393px;width:1px;height:19px;background:#dcdde1"></div>
<div style="position:absolute;left:561px;top:393px;width:1px;height:19px;background:#dcdde1"></div>
<svg class="a" style="left:379px;top:397px" width="16" height="10" viewBox="0 0 16 10"><path d="M0.5 0.5 H15.5 L11.5 9.5 H4.5 Z" fill="#1a9be0" stroke="#000" stroke-width="1"/><path d="M2.6 4 H13.4 L12.6 6 H3.4 Z" fill="#f5f000"/></svg>
<div class="t gi" style="left:400px;top:396px">870</div>
<div class="t" style="left:456px;top:396px;">212</div>
<div class="t" style="left:505px;top:396px;">0</div>
<div style="position:absolute;left:272px;top:430px;width:15px;height:1px;background:#d8dade"></div>
<div style="position:absolute;left:396px;top:430px;width:166px;height:1px;background:#dcdde1"></div>
<div style="position:absolute;left:396px;top:412px;width:1px;height:19px;background:#dcdde1"></div>
<div style="position:absolute;left:452px;top:412px;width:1px;height:19px;background:#dcdde1"></div>
<div style="position:absolute;left:501px;top:412px;width:1px;height:19px;background:#dcdde1"></div>
<div style="position:absolute;left:561px;top:412px;width:1px;height:19px;background:#dcdde1"></div>
<svg class="a" style="left:379px;top:416px" width="16" height="10" viewBox="0 0 16 10"><path d="M0.5 0.5 H15.5 L11.5 9.5 H4.5 Z" fill="#1a9be0" stroke="#000" stroke-width="1"/><path d="M2.6 4 H13.4 L12.6 6 H3.4 Z" fill="#f5f000"/></svg>
<div class="t gi" style="left:400px;top:415px">860</div>
<div class="t" style="left:456px;top:415px;">416</div>
<div class="t" style="left:505px;top:415px;">0</div>
<div style="position:absolute;left:272px;top:449px;width:15px;height:1px;background:#d8dade"></div>
<div style="position:absolute;left:396px;top:449px;width:166px;height:1px;background:#dcdde1"></div>
<div style="position:absolute;left:396px;top:431px;width:1px;height:19px;background:#dcdde1"></div>
<div style="position:absolute;left:452px;top:431px;width:1px;height:19px;background:#dcdde1"></div>
<div style="position:absolute;left:501px;top:431px;width:1px;height:19px;background:#dcdde1"></div>
<div style="position:absolute;left:561px;top:431px;width:1px;height:19px;background:#dcdde1"></div>
<svg class="a" style="left:379px;top:435px" width="16" height="10" viewBox="0 0 16 10"><path d="M0.5 0.5 H15.5 L11.5 9.5 H4.5 Z" fill="#1a9be0" stroke="#000" stroke-width="1"/><path d="M2.6 4 H13.4 L12.6 6 H3.4 Z" fill="#f5f000"/></svg>
<div class="t gi" style="left:400px;top:434px">850</div>
<div class="t" style="left:456px;top:434px;">443</div>
<div class="t" style="left:505px;top:434px;">0</div>
<div style="position:absolute;left:272px;top:468px;width:15px;height:1px;background:#d8dade"></div>
<div style="position:absolute;left:396px;top:468px;width:166px;height:1px;background:#dcdde1"></div>
<div style="position:absolute;left:396px;top:450px;width:1px;height:19px;background:#dcdde1"></div>
<div style="position:absolute;left:452px;top:450px;width:1px;height:19px;background:#dcdde1"></div>
<div style="position:absolute;left:501px;top:450px;width:1px;height:19px;background:#dcdde1"></div>
<div style="position:absolute;left:561px;top:450px;width:1px;height:19px;background:#dcdde1"></div>
<svg class="a" style="left:379px;top:454px" width="16" height="10" viewBox="0 0 16 10"><path d="M0.5 0.5 H15.5 L11.5 9.5 H4.5 Z" fill="#1a9be0" stroke="#000" stroke-width="1"/><path d="M2.6 4 H13.4 L12.6 6 H3.4 Z" fill="#f5f000"/></svg>
<div class="t gi" style="left:400px;top:453px">840</div>
<div class="t" style="left:456px;top:453px;">505</div>
<div class="t" style="left:505px;top:453px;">0</div>
<div style="position:absolute;left:272px;top:487px;width:15px;height:1px;background:#d8dade"></div>
<div style="position:absolute;left:396px;top:487px;width:166px;height:1px;background:#dcdde1"></div>
<div style="position:absolute;left:396px;top:469px;width:1px;height:19px;background:#dcdde1"></div>
<div style="position:absolute;left:452px;top:469px;width:1px;height:19px;background:#dcdde1"></div>
<div style="position:absolute;left:501px;top:469px;width:1px;height:19px;background:#dcdde1"></div>
<div style="position:absolute;left:561px;top:469px;width:1px;height:19px;background:#dcdde1"></div>
<svg class="a" style="left:379px;top:473px" width="16" height="10" viewBox="0 0 16 10"><path d="M0.5 0.5 H15.5 L11.5 9.5 H4.5 Z" fill="#1a9be0" stroke="#000" stroke-width="1"/><path d="M2.6 4 H13.4 L12.6 6 H3.4 Z" fill="#f5f000"/></svg>
<div class="t gi" style="left:400px;top:472px">830</div>
<div class="t" style="left:456px;top:472px;">537</div>
<div class="t" style="left:505px;top:472px;">0</div>
<div style="position:absolute;left:272px;top:506px;width:15px;height:1px;background:#d8dade"></div>
<div style="position:absolute;left:396px;top:506px;width:166px;height:1px;background:#dcdde1"></div>
<div style="position:absolute;left:396px;top:488px;width:1px;height:19px;background:#dcdde1"></div>
<div style="position:absolute;left:452px;top:488px;width:1px;height:19px;background:#dcdde1"></div>
<div style="position:absolute;left:501px;top:488px;width:1px;height:19px;background:#dcdde1"></div>
<div style="position:absolute;left:561px;top:488px;width:1px;height:19px;background:#dcdde1"></div>
<svg class="a" style="left:379px;top:492px" width="16" height="10" viewBox="0 0 16 10"><path d="M0.5 0.5 H15.5 L11.5 9.5 H4.5 Z" fill="#1a9be0" stroke="#000" stroke-width="1"/><path d="M2.6 4 H13.4 L12.6 6 H3.4 Z" fill="#f5f000"/></svg>
<div class="t gi" style="left:400px;top:491px">820</div>
<div class="t" style="left:456px;top:491px;">561</div>
<div class="t" style="left:505px;top:491px;">0</div>
<div style="position:absolute;left:271px;top:506px;width:346px;height:1px;background:#a4a7b0"></div>
<svg class="a" style="left:444px;top:513px" width="14" height="2" viewBox="0 0 14 2"><rect x="0" y="0" width="1" height="2" fill="#9a9da6"/><rect x="2" y="0" width="1" height="2" fill="#9a9da6"/><rect x="4" y="0" width="1" height="2" fill="#9a9da6"/><rect x="6" y="0" width="1" height="2" fill="#9a9da6"/><rect x="8" y="0" width="1" height="2" fill="#9a9da6"/><rect x="10" y="0" width="1" height="2" fill="#9a9da6"/><rect x="12" y="0" width="1" height="2" fill="#9a9da6"/></svg>
<div style="position:absolute;left:268px;top:519px;width:352px;height:179px;border:1px solid #cfd1d7;border-radius:3px"></div>
<div style="position:absolute;left:271px;top:522px;width:346px;height:142px;border:1px solid #a4a7b0;background:#fff"></div>
<div style="position:absolute;left:272px;top:523px;width:344px;height:19px;background:linear-gradient(#f8f8fa,#eef0f3)"></div>
<div style="position:absolute;left:272px;top:542px;width:248px;height:1px;background:#c8cad0"></div>
<div style="position:absolute;left:520px;top:542px;width:96px;height:1px;background:#d2d4d9"></div>
<div style="position:absolute;left:287px;top:523px;width:1px;height:58px;background:#d2d4d9"></div>
<div style="position:absolute;left:330px;top:523px;width:1px;height:58px;background:#d2d4d9"></div>
<div style="position:absolute;left:382px;top:523px;width:1px;height:58px;background:#d2d4d9"></div>
<div style="position:absolute;left:475px;top:523px;width:1px;height:58px;background:#d2d4d9"></div>
<div style="position:absolute;left:520px;top:523px;width:1px;height:58px;background:#d2d4d9"></div>
<div class="t" style="left:291px;top:527px;">Visible</div>
<div class="t" style="left:334px;top:527px;">Painting</div>
<div class="t" style="left:386px;top:527px;">Wall Control</div>
<div class="t" style="left:479px;top:527px;">Color</div>
<div style="position:absolute;left:272px;top:543px;width:15px;height:38px;background:#f1f2f4"></div>
<div style="position:absolute;left:272px;top:561px;width:248px;height:1px;background:#dcdde1"></div>
<div style="position:absolute;left:272px;top:580px;width:248px;height:1px;background:#dcdde1"></div>
<div style="position:absolute;left:331px;top:562px;width:189px;height:18px;background:#eceef1"></div>
<svg class="a" style="left:278px;top:567px" width="4" height="7" viewBox="0 0 4 7"><path d="M0 0 L4 3.5 L0 7 Z" fill="#111"/></svg>
<div style="position:absolute;left:303px;top:545px;width:13px;height:13px;border:1px solid #8d9099;background:linear-gradient(#dcdde2,#f3f3f5);box-shadow:inset 0 0 0 1px #e4e5e9"></div>
<svg class="a" style="left:304px;top:542px" width="14" height="15" viewBox="0 0 14 15"><path d="M1.5 8.5 L5 13.5 L12.5 0.8" fill="none" stroke="#1a1a1a" stroke-width="1.8"/></svg>
<div style="position:absolute;left:350px;top:545px;width:13px;height:13px;border:1px solid #8d9099;background:linear-gradient(#dcdde2,#f3f3f5);box-shadow:inset 0 0 0 1px #e4e5e9"></div>
<svg class="a" style="left:351px;top:542px" width="14" height="15" viewBox="0 0 14 15"><path d="M1.5 8.5 L5 13.5 L12.5 0.8" fill="none" stroke="#1a1a1a" stroke-width="1.8"/></svg>
<div class="t" style="left:387px;top:546px;">Wall</div>
<div style="position:absolute;left:478px;top:545px;width:40px;height:15px;border:1px solid #a8a8a8;background:#ff00ff"></div>
<div style="position:absolute;left:303px;top:564px;width:13px;height:13px;border:1px solid #8d9099;background:linear-gradient(#dcdde2,#f3f3f5);box-shadow:inset 0 0 0 1px #e4e5e9"></div>
<svg class="a" style="left:304px;top:561px" width="14" height="15" viewBox="0 0 14 15"><path d="M1.5 8.5 L5 13.5 L12.5 0.8" fill="none" stroke="#1a1a1a" stroke-width="1.8"/></svg>
<div style="position:absolute;left:350px;top:564px;width:13px;height:13px;border:1px solid #8d9099;background:linear-gradient(#dcdde2,#f3f3f5);box-shadow:inset 0 0 0 1px #e4e5e9"></div>
<div class="t" style="left:387px;top:565px;">Rehab</div>
<div style="position:absolute;left:478px;top:564px;width:40px;height:15px;border:1px solid #a8a8a8;background:#ff0000"></div>
<div class="t" style="left:279px;top:676px;">Rotation</div>
<div style="position:absolute;left:342px;top:677px;width:270px;height:1px;background:#dcdde2"></div>
<svg class="a" style="left:331px;top:672px" width="12" height="14" viewBox="0 0 12 14"><defs><linearGradient id="th" x1="0" y1="0" x2="0" y2="1"><stop offset="0" stop-color="#fafafb"/><stop offset="1" stop-color="#dcdee3"/></linearGradient></defs><path d="M0.5 0.5 H11 V8 L5.75 13 L0.5 8 Z" fill="url(#th)" stroke="#a3a6ae" stroke-width="1"/></svg>
<div style="position:absolute;left:336px;top:689px;width:1px;height:2px;background:#8d9099"></div>
<div style="position:absolute;left:362px;top:689px;width:1px;height:2px;background:#8d9099"></div>
<div style="position:absolute;left:388px;top:689px;width:1px;height:2px;background:#8d9099"></div>
<div style="position:absolute;left:414px;top:689px;width:1px;height:2px;background:#8d9099"></div>
<div style="position:absolute;left:440px;top:689px;width:1px;height:2px;background:#8d9099"></div>
<div style="position:absolute;left:449px;top:689px;width:1px;height:2px;background:#8d9099"></div>
<div style="position:absolute;left:474px;top:689px;width:1px;height:2px;background:#8d9099"></div>
<div style="position:absolute;left:500px;top:689px;width:1px;height:2px;background:#8d9099"></div>
<div style="position:absolute;left:526px;top:689px;width:1px;height:2px;background:#8d9099"></div>
<div style="position:absolute;left:552px;top:689px;width:1px;height:2px;background:#8d9099"></div>
<div style="position:absolute;left:578px;top:689px;width:1px;height:2px;background:#8d9099"></div>
<div style="position:absolute;left:604px;top:689px;width:1px;height:2px;background:#8d9099"></div>
<div style="position:absolute;left:632px;top:30px;width:578px;height:671px;border:1px solid #cfd1d7;border-radius:3px;background:#eceef1"></div>
<div style="position:absolute;left:636px;top:34px;width:570px;height:37px;border:1px solid #c6c8ce;border-radius:4px;background:linear-gradient(#ffffff,#eef0f4)"></div>
<div style="position:absolute;left:667px;top:38px;width:1px;height:29px;background:linear-gradient(rgba(200,202,208,0),#c8cad0 30%,#c8cad0 70%,rgba(200,202,208,0))"></div>
<div style="position:absolute;left:752px;top:38px;width:1px;height:29px;background:linear-gradient(rgba(200,202,208,0),#c8cad0 30%,#c8cad0 70%,rgba(200,202,208,0))"></div>
<div style="position:absolute;left:785px;top:38px;width:1px;height:29px;background:linear-gradient(rgba(200,202,208,0),#c8cad0 30%,#c8cad0 70%,rgba(200,202,208,0))"></div>
<div style="position:absolute;left:844px;top:38px;width:1px;height:29px;background:linear-gradient(rgba(200,202,208,0),#c8cad0 30%,#c8cad0 70%,rgba(200,202,208,0))"></div>
<div style="position:absolute;left:635px;top:76px;width:572px;height:622px;background:#fff"></div>
<svg class="a" style="left:644px;top:45px" width="14" height="14" viewBox="0 0 14 14"><rect x="0.5" y="0.5" width="13" height="13" fill="none" stroke="#222" stroke-width="1" stroke-dasharray="2 1.5"/></svg>
<svg class="a" style="left:677px;top:45px" width="14" height="14" viewBox="0 0 14 14"><path d="M6 2.5 H8 V6 H11.5 V8 H8 V11.5 H6 V8 H2.5 V6 H6 Z" fill="#000"/><path d="M7 0 L10.3 3.4 H3.7 Z M7 14 L10.3 10.6 H3.7 Z M0 7 L3.4 3.7 V10.3 Z M14 7 L10.6 3.7 V10.3 Z" fill="#000"/></svg>
<svg class="a" style="left:702px;top:44px" width="17" height="16" viewBox="0 0 17 16"><g fill="none" stroke="#2e3236" stroke-width="1.1" stroke-linecap="round"><path d="M9.8 3 Q9.6 -0.2 7.2 -0.2 Q4.3 -0.2 4.3 7.8 Q4.3 15.7 7.2 15.7 Q9.4 15.7 10.2 12.6"/><path d="M2.6 5.2 Q0.4 5.8 0.4 7.5 Q0.4 9.4 2.6 9.9"/><path d="M6.2 10.2 H10.5 Q15.6 10 15.6 7.6 Q15.6 5.8 13 5.2"/><path d="M9.5 2 V5 M8 3.5 H11 M12.3 4 V7 M10.8 5.5 H13.8 M7.5 6 V9 M6 7.5 H9" stroke-width="1.2"/></g></svg>
<svg class="a" style="left:727px;top:43px" width="18" height="18" viewBox="0 0 18 18"><defs><radialGradient id="lens" cx="40%" cy="35%" r="65%"><stop offset="0" stop-color="#ffffff"/><stop offset="1" stop-color="#b4cde6"/></radialGradient><linearGradient id="hdl" x1="0" y1="0" x2="1" y2="1"><stop offset="0" stop-color="#ffe060"/><stop offset="1" stop-color="#e89010"/></linearGradient></defs><path d="M10.2 10.5 L15.6 15.6" stroke="#5a4a30" stroke-width="4" stroke-linecap="round"/><path d="M10.2 10.5 L15.6 15.6" stroke="url(#hdl)" stroke-width="2.6" stroke-linecap="round"/><circle cx="6.5" cy="6.5" r="5.2" fill="url(#lens)" stroke="#3a3d42" stroke-width="1.3"/></svg>
<svg class="a" style="left:761px;top:44px" width="16" height="16" viewBox="0 0 16 16"><rect x="0.5" y="0.5" width="15" height="15" fill="#dde6f3" stroke="#3d5b99" stroke-width="1"/><path d="M3 3 L6.5 6.5 M3 3 H6 M3 3 V6 M13 3 L9.5 6.5 M13 3 H10 M13 3 V6 M3 13 L6.5 9.5 M3 13 H6 M3 13 V10 M13 13 L9.5 9.5 M13 13 H10 M13 13 V10" stroke="#1e3460" stroke-width="1.3"/></svg>
<svg class="a" style="left:796px;top:46px" width="13" height="12" viewBox="0 0 13 12"><path d="M4 0 V12 M9 0 V12 M0 3.5 H13 M0 8.5 H13" stroke="#000" stroke-width="1.2"/></svg>
<svg class="a" style="left:820px;top:46px" width="16" height="11" viewBox="0 0 16 11"><defs><linearGradient id="rul" x1="0" y1="0" x2="0" y2="1"><stop offset="0" stop-color="#fcd08a"/><stop offset="1" stop-color="#ec9a30"/></linearGradient></defs><rect x="0.5" y="0.5" width="15" height="10" rx="1" fill="url(#rul)" stroke="#c87018" stroke-width="1"/><path d="M3 10 V7 M5.5 10 V8 M8 10 V6.5 M10.5 10 V8 M13 10 V7" stroke="#a85a10" stroke-width="0.8"/></svg>
<svg class="a" style="left:853px;top:44px" width="17" height="16" viewBox="0 0 17 16"><path d="M0.5 4 H7.5 M4 0.5 V7.5" stroke="#1d9a1d" stroke-width="2"/><path d="M15.5 1 L9 11" stroke="#8a5a20" stroke-width="2"/><path d="M9.5 10.5 Q6 11 6 15 Q9 14.5 10.5 12 Z" fill="#c9b48a" stroke="#6a4a20" stroke-width="0.6"/></svg>
<svg class="a" style="left:879px;top:44px" width="17" height="16" viewBox="0 0 17 16"><path d="M1 4 H7" stroke="#d01010" stroke-width="2"/><path d="M15.5 1 L9 11" stroke="#8a5a20" stroke-width="2"/><path d="M9.5 10.5 Q6 11 6 15 Q9 14.5 10.5 12 Z" fill="#c9b48a" stroke="#6a4a20" stroke-width="0.6"/></svg>
<div style="position:absolute;left:911px;top:48px;width:61px;height:1px;background:linear-gradient(90deg,rgba(180,170,200,0),#c4bfd0 15%,#c8c6d2 85%,rgba(200,200,210,0))"></div>
<svg class="a" style="left:917px;top:41px" width="12" height="18" viewBox="0 0 12 18"><defs><linearGradient id="th2" x1="0" y1="0" x2="1" y2="0"><stop offset="0" stop-color="#fafafb"/><stop offset="1" stop-color="#dadce2"/></linearGradient></defs><path d="M0.5 0.5 H11 V11 L5.75 17 L0.5 11 Z" fill="url(#th2)" stroke="#9fa2ab" stroke-width="1"/></svg>
<svg class="a" style="left:635px;top:76px" width="572" height="622" viewBox="0 0 572 622"><polygon points="88.3,25.5 116.5,13.3 144.2,7.9 170.6,14.0 203.3,25.3 345.7,174.8 428.5,341.5 437.8,550.0 304.5,564.5 237.7,441.3 236.4,435.5 190.8,375.0 147.2,321.3 108.6,264.3 71.7,220.3 58.0,205.6 44.0,186.7 44.4,176.2 52.8,146.9 82.5,75.5 102.0,53.0" fill="#949494"/>
<polygon points="110.2,66.2 127.2,56.1 137.9,53.0 154.2,54.9 174.4,59.3 193.2,78.8 210.9,58.6 331.2,180.9 412.7,341.0 422.7,535.0 315.7,549.5 247.7,426.7 204.0,368.0 160.6,313.0 123.7,257.6 85.3,212.0 59.0,181.5 67.5,153.0 93.8,92.0" fill="#c8c8c8"/>
<polygon points="91.3,29.0 113.3,19.6 139.0,16.5 165.6,22.8 193.2,33.5 210.9,58.6 193.2,78.8 173.0,56.1 155.5,48.6 137.3,44.8 123.4,46.0 104.0,53.6 102.0,53.0" fill="#cbcbcb"/>
<polygon points="151.0,19.6 165.6,22.8 193.2,33.5 210.9,58.6 193.2,78.8 173.0,56.1 155.5,48.6 145.0,45.5" fill="#d2d2d2"/>
<polygon points="104.0,53.6 123.4,46.0 137.3,44.8 155.5,48.6 173.0,56.1 193.2,78.8 174.4,59.3 154.2,54.9 137.9,53.0 127.2,56.1 110.2,66.2" fill="#8f8f8f"/>
<polygon points="88.3,25.5 116.5,13.3 144.2,7.9 170.6,14.0 203.3,25.3 345.7,174.8 428.5,341.5 437.8,550.0 304.5,564.5 237.7,441.3 236.4,435.5 190.8,375.0 147.2,321.3 108.6,264.3 71.7,220.3 58.0,205.6 44.0,186.7 44.4,176.2 52.8,146.9 82.5,75.5 102.0,53.0" fill="none" stroke="#ff0000" stroke-width="3.4" stroke-linejoin="round"/>
<circle cx="88.29999999999995" cy="25.5" r="3.2" fill="#f00"/><circle cx="437.79999999999995" cy="550" r="3" fill="#f00"/><circle cx="304.5" cy="564.5" r="3" fill="#f00"/><circle cx="237.70000000000005" cy="441.29999999999995" r="2.5" fill="#f00"/></svg>
<svg class="a" style="left:740px;top:648px" width="370" height="26" viewBox="0 0 370 26"><rect x="5" y="12" width="344" height="12" fill="#fff"/><rect x="5" y="18" width="69" height="5" fill="#6e6e6e"/><rect x="74" y="13" width="69" height="5" fill="#6e6e6e"/><rect x="143" y="18" width="68" height="5" fill="#6e6e6e"/><rect x="211" y="13" width="69" height="5" fill="#6e6e6e"/><rect x="280" y="18" width="69" height="5" fill="#6e6e6e"/><rect x="5" y="12" width="344" height="1" fill="#000"/><rect x="5" y="23" width="344" height="1" fill="#000"/><text x="5.5" y="11" font-family="Liberation Sans" font-size="11" text-anchor="middle" fill="#000">0</text><text x="74.5" y="11" font-family="Liberation Sans" font-size="11" text-anchor="middle" fill="#000">100</text><text x="143.5" y="11" font-family="Liberation Sans" font-size="11" text-anchor="middle" fill="#000">200</text><text x="211.5" y="11" font-family="Liberation Sans" font-size="11" text-anchor="middle" fill="#000">300</text><text x="280.5" y="11" font-family="Liberation Sans" font-size="11" text-anchor="middle" fill="#000">400</text><text x="349.5" y="11" font-family="Liberation Sans" font-size="11" text-anchor="middle" fill="#000">500</text></svg>
<div class="t" style="left:638px;top:687px;font-size:8px;font-weight:bold;color:#5c5c5c;letter-spacing:0.9px;word-spacing:-1px">5000 fps | 0.200 ms/f</div>
<div class="t" style="left:764px;top:687px;width:443px;overflow:hidden;font-size:8px;font-weight:bold;color:#5c5c5c;letter-spacing:0.8px;word-spacing:-1.5px">NVIDIA Corporation NVIDIA GeForce RTX 3080 Laptop GPU/PCIe/SSE2 | OpenGL v4.6.0 NVIDIA 552.74</div>
<svg class="a" style="left:1120px;top:80px" width="90" height="82" viewBox="0 0 90 82"><defs>
<linearGradient id="gy" x1="0" y1="0" x2="1" y2="0"><stop offset="0" stop-color="#cfe880"/><stop offset="0.5" stop-color="#7cc020"/><stop offset="1" stop-color="#3a7a10"/></linearGradient>
<linearGradient id="gx" x1="0" y1="0" x2="1" y2="0"><stop offset="0" stop-color="#f04000"/><stop offset="1" stop-color="#902000"/></linearGradient>
<linearGradient id="gg" x1="0" y1="0" x2="0" y2="1"><stop offset="0" stop-color="#777"/><stop offset="1" stop-color="#333"/></linearGradient>
<linearGradient id="gg2" x1="0" y1="0" x2="1" y2="0"><stop offset="0" stop-color="#333"/><stop offset="0.5" stop-color="#888"/><stop offset="1" stop-color="#444"/></linearGradient>
</defs>
<text x="37.3" y="9.8" font-family="Liberation Sans" font-size="11" font-weight="bold" text-anchor="middle" fill="#000">Y</text>
<path d="M29.2 12.6 H44.3 L37.2 30.5 Z" fill="url(#gy)"/>
<rect x="25.2" y="34.9" width="22.7" height="22" fill="#c4c4c4"/>
<circle cx="37.2" cy="46.2" r="7.5" fill="#2c4374"/>
<text x="37.2" y="50" font-family="Liberation Sans" font-size="10" text-anchor="middle" fill="#e8c890">Z</text>
<path d="M2.8 38.7 L21.4 45.8 L2.8 53.1 Z" fill="url(#gg)"/>
<path d="M71.1 38.7 L52.3 45.8 L71.1 53.1 Z" fill="url(#gx)"/>
<text x="73" y="50" font-family="Liberation Sans" font-size="11" font-weight="bold" fill="#000">X</text>
<path d="M37.2 62 L44.7 79.6 H29.2 Z" fill="url(#gg2)"/></svg>
<div class="a" style="left:1170px;top:76px;width:37px;height:32px;overflow:hidden"><svg class="a" style="left:0;top:0" width="37" height="32" viewBox="-30 -7 37 32"><defs><radialGradient id="sunr" cx="65%" cy="35%" r="60%"><stop offset="0" stop-color="#fff27a"/><stop offset="0.6" stop-color="#ffe020"/><stop offset="1" stop-color="#f5c010"/></radialGradient><radialGradient id="rayg" cx="50%" cy="50%" r="50%"><stop offset="0.5" stop-color="#fcd420"/><stop offset="1" stop-color="#fff060"/></radialGradient></defs><polygon points="22.5,8.2 10.5,7.7 12.7,16.7 4.6,12.1 1.9,23.9 -2.7,12.7 -9.9,18.5 -9.1,9.3 -21.0,11.6 -12.7,2.9 -21.0,-1.4 -12.2,-4.5 -19.3,-14.2 -7.9,-10.4 -7.5,-19.6 -1.0,-13.0 4.9,-23.5 6.2,-11.5 14.7,-15.0 11.4,-6.3 23.4,-5.3 13.0,0.8" fill="url(#rayg)"/><circle r="14" fill="url(#sunr)"/></svg></div>
<svg class="a" style="left:635px;top:76px" width="572" height="622" viewBox="0 0 572 622"><path d="M0 0.5 H572 M0 621.5 H572" stroke="#000" stroke-width="1.1" stroke-dasharray="5 3" stroke-dashoffset="5"/><path d="M0.5 0 V622 M571.5 0 V622" stroke="#000" stroke-width="1.1" stroke-dasharray="5 3"/></svg>
<svg class="a" style="left:1178px;top:76px" width="29" height="30" viewBox="0 0 29 30"><path d="M0 0.5 H29" stroke="#1f3cff" stroke-width="1.1" stroke-dasharray="5 3" stroke-dashoffset="4"/><path d="M28.5 0 V30" stroke="#1f3cff" stroke-width="1.1" stroke-dasharray="5 3"/></svg>
<div style="position:absolute;left:1212px;top:28px;width:19px;height:675px;background:#eceef1"></div>
<div style="position:absolute;left:1214px;top:33px;width:17px;height:48px;border:1px solid #a9acb5;border-right:none;background:linear-gradient(90deg,#dcdee3,#eceef1 40%,#f3f4f6)"></div>
<div style="position:absolute;left:1214px;top:82px;width:17px;height:42px;border:1px solid #a9acb5;border-right:none;background:linear-gradient(90deg,#dcdee3,#eceef1 40%,#f3f4f6)"></div>
<div class="t" style="left:1216px;top:39px;transform-origin:0 0;transform:translate(13px,0) rotate(90deg);color:#2a2f50">Layers</div>
<div class="t" style="left:1216px;top:88px;transform-origin:0 0;transform:translate(13px,0) rotate(90deg);color:#2a2f50">Undo</div>
</body></html>
